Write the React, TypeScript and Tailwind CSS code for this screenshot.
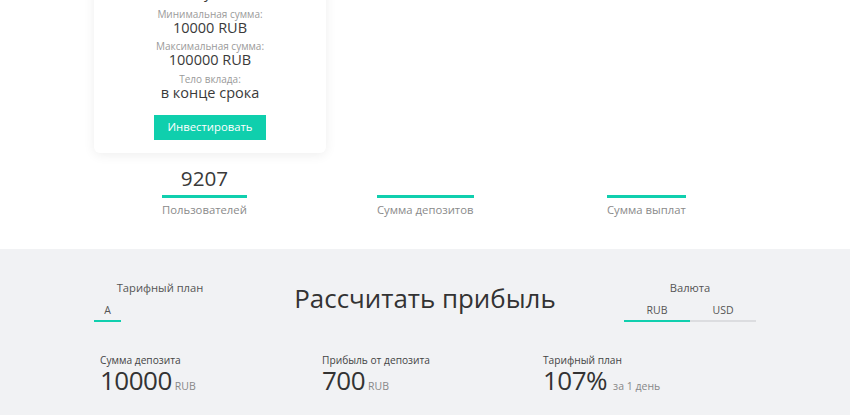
const cardRows = [
  { label: "Минимальная сумма:", value: "10000 RUB" },
  { label: "Максимальная сумма:", value: "100000 RUB" },
  { label: "Тело вклада:", value: "в конце срока" },
];

const stats = [
  { value: "9207", label: "Пользователей", cls: "w-[85px] ml-[68px]" },
  { value: "", label: "Сумма депозитов", cls: "w-[97px] ml-[130px]" },
  { value: "", label: "Сумма выплат", cls: "w-[79px] ml-[133px]" },
];

const results = [
  { label: "Сумма депозита", value: "10000", unit: "RUB", gap: "gap-[3px]" },
  { label: "Прибыль от депозита", value: "700", unit: "RUB", gap: "gap-[3px]" },
  { label: "Тарифный план", value: "107%", unit: "за 1 день", gap: "gap-[6px]" },
];

export default function App() {
  return (
    <div
      className="w-[850px] h-[415px] overflow-hidden bg-white text-[#333]"
      style={{ fontFamily: '"Open Sans", "Noto Sans", sans-serif' }}
    >
      {/* Top: plan card + stats */}
      <section className="h-[249px] overflow-hidden">
        <div className="mx-[94px]">
          <div className="w-[232px] -mt-[46px] pt-[20px] pb-[13px] rounded-md bg-white shadow-[0_2px_12px_rgba(0,0,0,0.07)] flex flex-col items-center text-center">
            <div className="flex flex-col items-center mb-[7.5px]">
              <span className="text-[10px] leading-[11px] text-[#9a9a9a]">Период:</span>
              <span className="text-[14.5px] leading-[16px] text-[#3a3a3a]">1 сутки</span>
            </div>
            {cardRows.map((r) => (
              <div key={r.label} className="flex flex-col items-center mb-[5.5px]">
                <span className="text-[10px] leading-[11px] text-[#9a9a9a]">{r.label}</span>
                <span className="text-[14.5px] leading-[16px] text-[#3a3a3a]">{r.value}</span>
              </div>
            ))}
            <button className="mt-[9px] w-[112px] h-[25px] bg-[#0fcfad] text-white text-[11.3px]">
              Инвестировать
            </button>
          </div>

          <div className="flex mt-[12px]">
            {stats.map((s) => (
              <div key={s.label} className={`${s.cls} flex flex-col`}>
                <span className="h-[26px] text-[20.7px] leading-[26px] text-center text-[#3a3a3a] whitespace-nowrap">
                  {s.value}
                </span>
                <div className="mt-[4px] h-[3px] bg-[#10cfae]" />
                <span className="mt-[4px] text-[11.3px] leading-[16px] text-[#8a8a8a] whitespace-nowrap">
                  {s.label}
                </span>
              </div>
            ))}
          </div>
        </div>
      </section>

      {/* Calculator */}
      <section className="h-[166px] bg-[#f1f2f4] pt-[31px]">
        <div className="mx-[94px]">
          <div className="flex items-center justify-between">
            <div className="w-[132px] flex flex-col">
              <span className="text-[11.2px] leading-[16px] text-center text-[#555]">Тарифный план</span>
              <div className="mt-[7px] flex">
                <span className="w-[27px] pb-[3px] text-center text-[10.5px] leading-[14px] text-[#555] border-b-2 border-[#10cfae]">
                  A
                </span>
              </div>
            </div>
            <h2 className="mb-[6px] text-[25.9px] leading-[34px] text-[#333]">Рассчитать прибыль</h2>
            <div className="w-[132px] flex flex-col">
              <span className="text-[11.2px] leading-[16px] text-center text-[#555]">Валюта</span>
              <div className="mt-[7px] flex">
                <span className="flex-1 pb-[3px] text-center text-[10.5px] leading-[14px] text-[#555] border-b-2 border-[#10cfae]">
                  RUB
                </span>
                <span className="flex-1 pb-[3px] text-center text-[10.5px] leading-[14px] text-[#555] border-b-2 border-[#dcdde0]">
                  USD
                </span>
              </div>
            </div>
          </div>

          <div className="mt-[31px] pl-[6px] grid grid-cols-[222px_221px_222px]">
            {results.map((r) => (
              <div key={r.label} className="flex flex-col">
                <span className="text-[10.2px] leading-[14px] text-[#444]">{r.label}</span>
                <div className={`flex items-baseline ${r.gap}`}>
                  <span className="text-[26px] leading-[27px] text-[#333] tracking-[-0.5px]">{r.value}</span>
                  <span className="text-[10.5px] leading-[14px] text-[#888]">{r.unit}</span>
                </div>
              </div>
            ))}
          </div>
        </div>
      </section>
    </div>
  );
}
